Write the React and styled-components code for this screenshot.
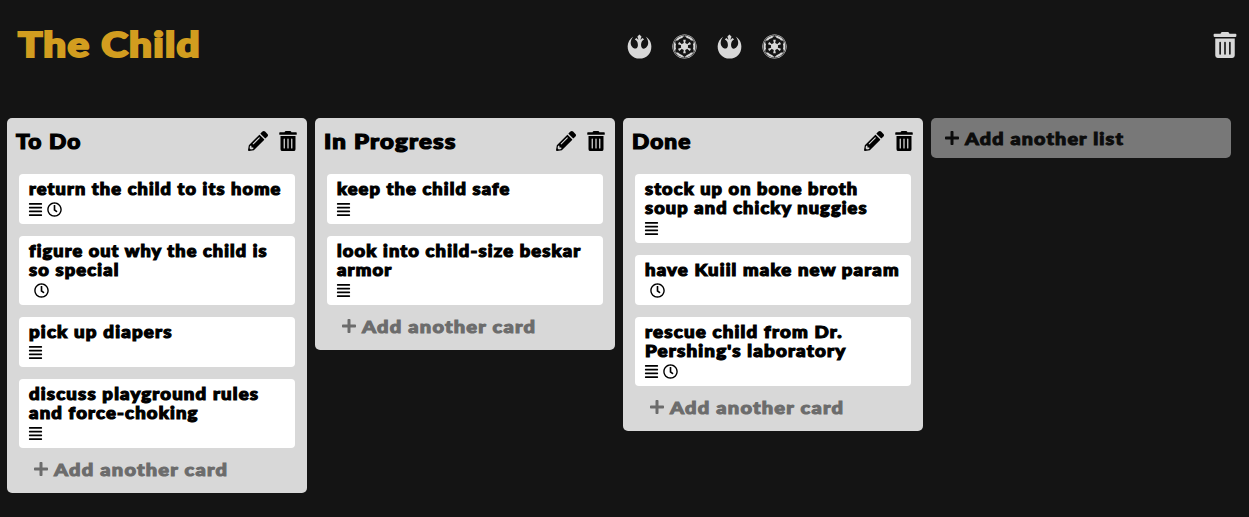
import React from "react";
import styled, { createGlobalStyle } from "styled-components";
import { FaRebel, FaEmpire, FaTrashAlt, FaPencilAlt, FaAlignJustify, FaRegClock, FaPlus } from "react-icons/fa";

const GlobalStyle = createGlobalStyle`
  * { box-sizing: border-box; }
  body {
    margin: 0;
    min-height: 100vh;
    background: #141414;
    color: #000;
    font-family: Lato, "Liberation Sans", sans-serif;
    font-weight: 900;
    overflow: hidden;
  }
`;

const Wide = styled.span`
  display: inline-block;
  transform: scaleX(${(p) => p.$stretch});
  transform-origin: left center;
  white-space: nowrap;
`;

const Header = styled.header`
  display: grid;
  grid-template-columns: 609px 1fr auto;
  align-items: center;
  height: 92px;
  padding: 0 12px 0 18px;
`;

const Title = styled.h1`
  margin: 0;
  padding-bottom: 5px;
  font-size: 33.5px;
  line-height: 44px;
  font-weight: 900;
  letter-spacing: 1px;
  color: #d29d1f;
  -webkit-text-stroke: 2px #d29d1f;
`;

const Emblems = styled.nav`
  display: flex;
  gap: 20px;
  color: #d8d8d8;
  font-size: 25px;
`;

const IconButton = styled.button`
  display: flex;
  padding: 0;
  border: 0;
  background: none;
  color: inherit;
  font-size: ${(p) => p.$size}px;
`;

const HeaderTrash = styled(IconButton)`
  margin: 0 -1px 3px 0;
  color: #d8d8d8;
`;

const Board = styled.main`
  display: flex;
  align-items: flex-start;
  gap: 8px;
  padding: 26px 7px 0;
`;

const List = styled.section`
  flex: 0 0 300px;
  border-radius: 5px;
  background: #d8d8d8;
  padding: 0 12px;
`;

const ListHeader = styled.div`
  display: flex;
  align-items: center;
  justify-content: space-between;
  height: 56px;
  margin: 0 -3px;
  padding-bottom: 10px;
`;

const ListTitle = styled.h2`
  margin: 0;
  font-size: 20px;
  line-height: 26px;
  font-weight: 900;
  letter-spacing: 1px;
  -webkit-text-stroke: 1.2px currentColor;
`;

const Actions = styled.div`
  display: flex;
  gap: 10px;
`;

const Card = styled.article`
  margin-bottom: 12px;
  padding: 5px 10px 7px;
  border-radius: 4px;
  background: #fff;
`;

const CardLine = styled.div`
  height: 19px;
  font-size: 16px;
  line-height: 20px;
  letter-spacing: 1px;
  -webkit-text-stroke: 1.1px currentColor;
`;

const Badges = styled.div`
  display: flex;
  align-items: center;
  gap: 4px;
  height: 19px;
  margin-left: ${(p) => (p.$indent ? 5 : -1)}px;
  padding-top: 4px;
`;

const AddButton = styled.button`
  display: flex;
  align-items: center;
  gap: 5px;
  height: 45px;
  margin-top: -12px;
  padding: 0 0 2px 14px;
  border: 0;
  background: none;
  color: #6c6c6c;
  font: inherit;
  font-size: 17px;
  letter-spacing: 1px;
  -webkit-text-stroke: 1px currentColor;

  svg {
    stroke-width: 0;
    margin-bottom: 1px;
  }
`;

const AddList = styled(AddButton)`
  flex: 0 0 300px;
  height: 40px;
  margin: 0;
  padding: 0 0 0 13px;
  border-radius: 5px;
  background: #787878;
  color: #0c0c0c;
`;

const lists = [
  {
    title: "To Do",
    stretch: 1.135,
    cards: [
      { lines: [["return the child to its home", 1.136]], notes: true, due: true },
      { lines: [["figure out why the child is", 1.131], ["so special", 1.145]], due: true },
      { lines: [["pick up diapers", 1.169]], notes: true },
      { lines: [["discuss playground rules", 1.162], ["and force-choking", 1.157]], notes: true },
    ],
  },
  {
    title: "In Progress",
    stretch: 1.2,
    cards: [
      { lines: [["keep the child safe", 1.14]], notes: true },
      { lines: [["look into child-size beskar", 1.147], ["armor", 1.155]], notes: true },
    ],
  },
  {
    title: "Done",
    stretch: 1.13,
    cards: [
      { lines: [["stock up on bone broth", 1.136], ["soup and chicky nuggies", 1.137]], notes: true },
      { lines: [["have Kuiil make new param", 1.158]], due: true },
      { lines: [["rescue child from Dr.", 1.171], ["Pershing's laboratory", 1.173]], notes: true, due: true },
    ],
  },
];

export default function App() {
  return (
    <>
      <GlobalStyle />
      <Header>
        <Title><Wide $stretch={1.208}>The Child</Wide></Title>
        <Emblems>
          <FaRebel />
          <FaEmpire />
          <FaRebel />
          <FaEmpire />
        </Emblems>
        <HeaderTrash $size={26} aria-label="Delete board"><FaTrashAlt /></HeaderTrash>
      </Header>
      <Board>
        {lists.map((list) => (
          <List key={list.title}>
            <ListHeader>
              <ListTitle><Wide $stretch={list.stretch}>{list.title}</Wide></ListTitle>
              <Actions>
                <IconButton $size={20} aria-label="Edit list"><FaPencilAlt /></IconButton>
                <IconButton $size={20} aria-label="Delete list"><FaTrashAlt /></IconButton>
              </Actions>
            </ListHeader>
            {list.cards.map((card) => (
              <Card key={card.lines[0][0]}>
                {card.lines.map(([text, stretch]) => (
                  <CardLine key={text}><Wide $stretch={stretch}>{text}</Wide></CardLine>
                ))}
                <Badges $indent={!card.notes}>
                  {card.notes && <FaAlignJustify size={15} />}
                  {card.due && <FaRegClock size={15} />}
                </Badges>
              </Card>
            ))}
            <AddButton><FaPlus size={16} /><Wide $stretch={1.182}>Add another card</Wide></AddButton>
          </List>
        ))}
        <AddList><FaPlus size={16} /><Wide $stretch={1.16}>Add another list</Wide></AddList>
      </Board>
    </>
  );
}
